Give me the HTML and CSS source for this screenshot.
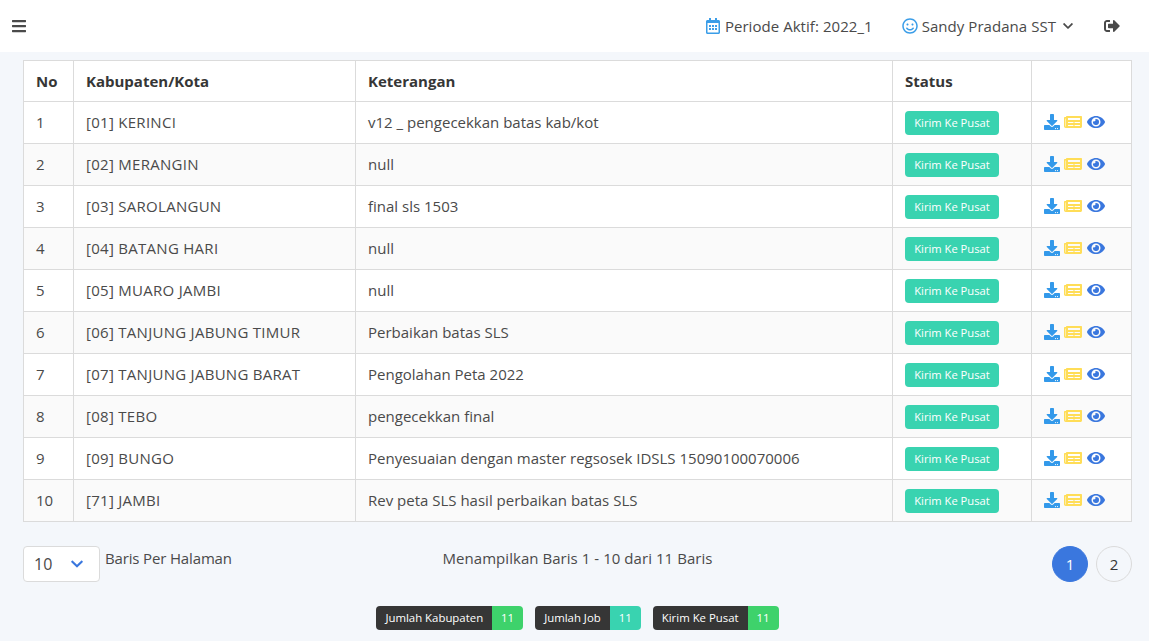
FILE: index.html
```html
<!DOCTYPE html>
<html>
    <head>
        <meta http-equiv="Content-Type" content="text/html; charset=utf-8" />
        <meta name="viewport" content="width=device-width, initial-scale=1.0">
        <title>Kirim Ke Pusat</title>
        <link rel="stylesheet" href="styles.css">
    </head>
<body>
    <svg class="sprite" xmlns="http://www.w3.org/2000/svg">
        <symbol id="i-bars" viewBox="0 0 448 512"><path d="M16 132h416c8.837 0 16-7.163 16-16V76c0-8.837-7.163-16-16-16H16C7.163 60 0 67.163 0 76v40c0 8.837 7.163 16 16 16zm0 160h416c8.837 0 16-7.163 16-16v-40c0-8.837-7.163-16-16-16H16c-8.837 0-16 7.163-16 16v40c0 8.837 7.163 16 16 16zm0 160h416c8.837 0 16-7.163 16-16v-40c0-8.837-7.163-16-16-16H16c-8.837 0-16 7.163-16 16v40c0 8.837 7.163 16 16 16z"/></symbol>
        <symbol id="i-chevron" viewBox="0 0 448 512"><path d="M207.029 381.476L12.686 187.132c-9.373-9.373-9.373-24.569 0-33.941l22.667-22.667c9.357-9.357 24.522-9.375 33.901-.04L224 284.505l154.745-154.021c9.379-9.335 24.544-9.317 33.901.04l22.667 22.667c9.373 9.373 9.373 24.569 0 33.941L240.971 381.476c-9.373 9.372-24.569 9.372-33.942 0z"/></symbol>
        <symbol id="i-eye" viewBox="0 0 576 512"><path d="M572.52 241.4C518.29 135.59 410.93 64 288 64S57.68 135.64 3.48 241.41a32.35 32.35 0 0 0 0 29.19C57.71 376.41 165.07 448 288 448s230.32-71.64 284.52-177.41a32.35 32.35 0 0 0 0-29.19zM288 400a144 144 0 1 1 144-144 143.93 143.93 0 0 1-144 144zm0-240a95.31 95.31 0 0 0-25.31 3.79 47.85 47.85 0 0 1-66.9 66.9A95.78 95.78 0 1 0 288 160z"/></symbol>
        <symbol id="i-download" viewBox="0 0 512 512"><path d="M216 0h80c13.3 0 24 10.7 24 24v168h87.7c17.8 0 26.7 21.5 14.1 34.1L269.7 378.3c-7.5 7.5-19.8 7.5-27.3 0L90.1 226.1c-12.6-12.6-3.7-34.1 14.1-34.1H192V24c0-13.3 10.7-24 24-24zm296 376v112c0 13.3-10.7 24-24 24H24c-13.3 0-24-10.7-24-24V376c0-13.3 10.7-24 24-24h146.7l49 49c20.1 20.1 52.5 20.1 72.6 0l49-49H488c13.3 0 24 10.7 24 24zm-124 88c0-11-9-20-20-20s-20 9-20 20 9 20 20 20 20-9 20-20zm64 0c0-11-9-20-20-20s-20 9-20 20 9 20 20 20 20-9 20-20z"/></symbol>
        <symbol id="i-news" viewBox="0 0 576 512"><path d="M552 64H88c-13.255 0-24 10.745-24 24v8H24c-13.255 0-24 10.745-24 24v272c0 30.928 25.072 56 56 56h472c26.51 0 48-21.49 48-48V88c0-13.255-10.745-24-24-24zM56 400a8 8 0 0 1-8-8V144h16v248a8 8 0 0 1-8 8zm236-16H140c-6.627 0-12-5.373-12-12v-8c0-6.627 5.373-12 12-12h152c6.627 0 12 5.373 12 12v8c0 6.627-5.373 12-12 12zm208 0H348c-6.627 0-12-5.373-12-12v-8c0-6.627 5.373-12 12-12h152c6.627 0 12 5.373 12 12v8c0 6.627-5.373 12-12 12zm-208-96H140c-6.627 0-12-5.373-12-12v-8c0-6.627 5.373-12 12-12h152c6.627 0 12 5.373 12 12v8c0 6.627-5.373 12-12 12zm208 0H348c-6.627 0-12-5.373-12-12v-8c0-6.627 5.373-12 12-12h152c6.627 0 12 5.373 12 12v8c0 6.627-5.373 12-12 12zm0-96H140c-6.627 0-12-5.373-12-12v-40c0-6.627 5.373-12 12-12h360c6.627 0 12 5.373 12 12v40c0 6.627-5.373 12-12 12z"/></symbol>
        <symbol id="i-calendar" viewBox="0 0 448 512"><path d="M148 288h-40c-6.6 0-12-5.4-12-12v-40c0-6.6 5.4-12 12-12h40c6.6 0 12 5.4 12 12v40c0 6.6-5.4 12-12 12zm108-12v-40c0-6.6-5.4-12-12-12h-40c-6.6 0-12 5.4-12 12v40c0 6.6 5.4 12 12 12h40c6.6 0 12-5.4 12-12zm96 0v-40c0-6.6-5.4-12-12-12h-40c-6.6 0-12 5.4-12 12v40c0 6.6 5.4 12 12 12h40c6.6 0 12-5.4 12-12zm-96 96v-40c0-6.6-5.4-12-12-12h-40c-6.6 0-12 5.4-12 12v40c0 6.6 5.4 12 12 12h40c6.6 0 12-5.4 12-12zm-96 0v-40c0-6.6-5.4-12-12-12h-40c-6.6 0-12 5.4-12 12v40c0 6.6 5.4 12 12 12h40c6.6 0 12-5.4 12-12zm192 0v-40c0-6.6-5.4-12-12-12h-40c-6.6 0-12 5.4-12 12v40c0 6.6 5.4 12 12 12h40c6.6 0 12-5.4 12-12zm96-260v352c0 26.5-21.5 48-48 48H48c-26.5 0-48-21.5-48-48V112c0-26.5 21.5-48 48-48h48V12c0-6.6 5.4-12 12-12h40c6.6 0 12 5.4 12 12v52h128V12c0-6.6 5.4-12 12-12h40c6.6 0 12 5.4 12 12v52h48c26.5 0 48 21.5 48 48zm-48 346V160H48v298c0 3.3 2.7 6 6 6h340c3.3 0 6-2.7 6-6z"/></symbol>
        <symbol id="i-smile" viewBox="0 0 496 512"><path d="M248 8C111 8 0 119 0 256s111 248 248 248 248-111 248-248S385 8 248 8zm0 448c-110.300 0-200-89.700-200-200S137.700 56 248 56s200 89.700 200 200-89.700 200-200 200zm-80-216c17.700 0 32-14.300 32-32s-14.300-32-32-32-32 14.300-32 32 14.300 32 32 32zm160 0c17.700 0 32-14.300 32-32s-14.300-32-32-32-32 14.300-32 32 14.300 32 32 32zm4 72.600c-20.800 25-51.500 39.400-84 39.400s-63.200-14.300-84-39.400c-8.500-10.200-23.700-11.500-33.800-3.100-10.200 8.500-11.500 23.600-3.100 33.800 30 36 74.100 56.600 120.900 56.600s90.900-20.600 120.900-56.600c8.500-10.200 7.100-25.300-3.100-33.800-10.100-8.400-25.300-7.100-33.800 3.100z"/></symbol>
        <symbol id="i-signout" viewBox="0 0 512 512"><path d="M497 273L329 441c-15 15-41 4.500-41-17v-96H152c-13.300 0-24-10.700-24-24v-96c0-13.300 10.700-24 24-24h136V88c0-21.400 25.900-32 41-17l168 168c9.300 9.400 9.300 24.600 0 34zM192 436v-40c0-6.600-5.400-12-12-12H96c-17.700 0-32-14.300-32-32V160c0-17.700 14.300-32 32-32h84c6.600 0 12-5.400 12-12V76c0-6.600-5.400-12-12-12H96c-53 0-96 43-96 96v192c0 53 43 96 96 96h84c6.600 0 12-5.400 12-12z"/></symbol>
    </svg>

    <nav class="navbar">
        <svg class="icon navBurger"><use href="#i-bars"/></svg>
        <div class="navRight">
            <div class="navItem periode">
                <svg class="icon navIcon"><use href="#i-calendar"/></svg>
                <span>Periode Aktif: 2022_1</span>
            </div>
            <div class="navItem user">
                <svg class="icon navIcon"><use href="#i-smile"/></svg>
                <span>Sandy Pradana SST</span>
                <svg class="icon navChevron"><use href="#i-chevron"/></svg>
            </div>
            <svg class="icon navLogout"><use href="#i-signout"/></svg>
        </div>
    </nav>

    <main class="content">
        <table class="dataTable">
            <colgroup>
                <col class="colNo">
                <col class="colKota">
                <col class="colKet">
                <col class="colStatus">
                <col class="colAksi">
            </colgroup>
            <thead>
                <tr><th>No</th><th>Kabupaten/Kota</th><th>Keterangan</th><th>Status</th><th></th></tr>
            </thead>
            <tbody>
                <tr>
                    <td>1</td><td>[01] KERINCI</td><td>v12 _ pengecekkan batas kab/kot</td>
                    <td><span class="statusTag">Kirim Ke Pusat</span></td>
                    <td><div class="actions"><svg class="icon actDownload"><use href="#i-download"/></svg><svg class="icon actNews"><use href="#i-news"/></svg><svg class="icon actEye"><use href="#i-eye"/></svg></div></td>
                </tr>
                <tr>
                    <td>2</td><td>[02] MERANGIN</td><td>null</td>
                    <td><span class="statusTag">Kirim Ke Pusat</span></td>
                    <td><div class="actions"><svg class="icon actDownload"><use href="#i-download"/></svg><svg class="icon actNews"><use href="#i-news"/></svg><svg class="icon actEye"><use href="#i-eye"/></svg></div></td>
                </tr>
                <tr>
                    <td>3</td><td>[03] SAROLANGUN</td><td>final sls 1503</td>
                    <td><span class="statusTag">Kirim Ke Pusat</span></td>
                    <td><div class="actions"><svg class="icon actDownload"><use href="#i-download"/></svg><svg class="icon actNews"><use href="#i-news"/></svg><svg class="icon actEye"><use href="#i-eye"/></svg></div></td>
                </tr>
                <tr>
                    <td>4</td><td>[04] BATANG HARI</td><td>null</td>
                    <td><span class="statusTag">Kirim Ke Pusat</span></td>
                    <td><div class="actions"><svg class="icon actDownload"><use href="#i-download"/></svg><svg class="icon actNews"><use href="#i-news"/></svg><svg class="icon actEye"><use href="#i-eye"/></svg></div></td>
                </tr>
                <tr>
                    <td>5</td><td>[05] MUARO JAMBI</td><td>null</td>
                    <td><span class="statusTag">Kirim Ke Pusat</span></td>
                    <td><div class="actions"><svg class="icon actDownload"><use href="#i-download"/></svg><svg class="icon actNews"><use href="#i-news"/></svg><svg class="icon actEye"><use href="#i-eye"/></svg></div></td>
                </tr>
                <tr>
                    <td>6</td><td>[06] TANJUNG JABUNG TIMUR</td><td>Perbaikan batas SLS</td>
                    <td><span class="statusTag">Kirim Ke Pusat</span></td>
                    <td><div class="actions"><svg class="icon actDownload"><use href="#i-download"/></svg><svg class="icon actNews"><use href="#i-news"/></svg><svg class="icon actEye"><use href="#i-eye"/></svg></div></td>
                </tr>
                <tr>
                    <td>7</td><td>[07] TANJUNG JABUNG BARAT</td><td>Pengolahan Peta 2022</td>
                    <td><span class="statusTag">Kirim Ke Pusat</span></td>
                    <td><div class="actions"><svg class="icon actDownload"><use href="#i-download"/></svg><svg class="icon actNews"><use href="#i-news"/></svg><svg class="icon actEye"><use href="#i-eye"/></svg></div></td>
                </tr>
                <tr>
                    <td>8</td><td>[08] TEBO</td><td>pengecekkan final</td>
                    <td><span class="statusTag">Kirim Ke Pusat</span></td>
                    <td><div class="actions"><svg class="icon actDownload"><use href="#i-download"/></svg><svg class="icon actNews"><use href="#i-news"/></svg><svg class="icon actEye"><use href="#i-eye"/></svg></div></td>
                </tr>
                <tr>
                    <td>9</td><td>[09] BUNGO</td><td>Penyesuaian dengan master regsosek IDSLS 15090100070006</td>
                    <td><span class="statusTag">Kirim Ke Pusat</span></td>
                    <td><div class="actions"><svg class="icon actDownload"><use href="#i-download"/></svg><svg class="icon actNews"><use href="#i-news"/></svg><svg class="icon actEye"><use href="#i-eye"/></svg></div></td>
                </tr>
                <tr>
                    <td>10</td><td>[71] JAMBI</td><td>Rev peta SLS hasil perbaikan batas SLS</td>
                    <td><span class="statusTag">Kirim Ke Pusat</span></td>
                    <td><div class="actions"><svg class="icon actDownload"><use href="#i-download"/></svg><svg class="icon actNews"><use href="#i-news"/></svg><svg class="icon actEye"><use href="#i-eye"/></svg></div></td>
                </tr>
            </tbody>
        </table>

        <div class="tableFooter">
            <div class="perPage">
                <div class="pageSelect">
                    <span>10</span>
                    <svg class="icon selectChevron"><use href="#i-chevron"/></svg>
                </div>
                <span class="perPageLabel">Baris Per Halaman</span>
            </div>
            <div class="rowInfo">Menampilkan Baris 1 - 10 dari 11 Baris</div>
            <div class="pager">
                <a class="pageBtn current">1</a>
                <a class="pageBtn">2</a>
            </div>
        </div>

        <div class="summary">
            <div class="sumTag"><span class="sumName">Jumlah Kabupaten</span><span class="sumVal green">11</span></div>
            <div class="sumTag"><span class="sumName">Jumlah Job</span><span class="sumVal teal">11</span></div>
            <div class="sumTag"><span class="sumName">Kirim Ke Pusat</span><span class="sumVal green">11</span></div>
        </div>
    </main>
</body>
</html>
```
FILE: styles.css
```css
html, body {
    height: 100%;
}
body {
    margin: 0;
    padding: 0;
    background-color: #f4f7fb;
    color: #4a4a4a;
    font-family: "Open Sans", "Noto Sans", sans-serif;
    font-size: 15px;
    overflow: hidden;
}
.sprite {
    display: none;
}
.icon {
    display: block;
    fill: currentColor;
    flex: none;
}

/* navbar */
.navbar {
    height: 52px;
    background-color: #fff;
    display: flex;
    align-items: center;
    justify-content: space-between;
    padding: 0 29px 0 12px;
}
.navBurger {
    width: 14px;
    height: 16px;
    color: #4a4a4a;
}
.navRight {
    display: flex;
    align-items: center;
}
.navItem {
    display: flex;
    align-items: center;
    letter-spacing: 0.05px;
}
.navIcon {
    width: 14px;
    height: 16px;
    margin-right: 5px;
    color: #3a9de8;
}
.periode {
    margin-right: 29px;
}
.user .navIcon {
    width: 16px;
    margin-right: 4px;
}
.navChevron {
    width: 10px;
    height: 12px;
    margin-left: 7px;
    color: #4a4a4a;
}
.navLogout {
    width: 16px;
    height: 16px;
    margin-left: 31px;
    color: #4a4a4a;
}

/* table */
.content {
    padding: 8px 17px 0 23px;
}
.dataTable {
    width: 1108px;
    table-layout: fixed;
    border-collapse: collapse;
    background-color: #fff;
}
.colNo { width: 50px; }
.colKota { width: 282px; }
.colKet { width: 537px; }
.colStatus { width: 139px; }
.colAksi { width: 100px; }
.dataTable th,
.dataTable td {
    border: 1px solid #dbdbdb;
    padding: 0 12px;
    text-align: left;
    white-space: nowrap;
}
.dataTable th {
    height: 40px;
    color: #363636;
    font-weight: 700;
}
.dataTable td {
    height: 39px;
    padding-bottom: 2px;
}
.dataTable tbody td:nth-child(2) {
    letter-spacing: 0.28px;
}
.dataTable tbody td:nth-child(4) {
    height: 41px;
    padding-bottom: 0;
}
.dataTable tbody tr:nth-child(even) {
    background-color: #fafafa;
}
.statusTag {
    display: inline-flex;
    align-items: center;
    height: 24px;
    width: 94px;
    justify-content: center;
    border-radius: 4px;
    background-color: #39d3b0;
    color: #fff;
    font-size: 11.2px;
    vertical-align: middle;
}
.actions {
    display: flex;
    align-items: center;
}
.actDownload {
    width: 16px;
    height: 16px;
    color: #3399ea;
}
.actNews {
    width: 18px;
    height: 16px;
    margin-left: 4px;
    color: #ffdd57;
}
.actEye {
    width: 18px;
    height: 16px;
    margin-left: 5px;
    color: #3a77de;
}

/* footer under the table */
.tableFooter {
    display: grid;
    grid-template-columns: 1fr 1fr 1fr;
    margin-top: 24px;
    height: 36px;
}
.perPage {
    display: flex;
    align-items: flex-start;
}
.pageSelect {
    box-sizing: border-box;
    width: 77px;
    height: 36px;
    display: flex;
    align-items: center;
    justify-content: space-between;
    padding: 0 16px 0 10px;
    background-color: #fff;
    border: 1px solid #dbdbdb;
    border-radius: 4px;
    font-size: 16px;
}
.selectChevron {
    width: 12px;
    height: 14px;
    color: #3a77de;
}
.perPageLabel {
    margin-left: 5px;
    line-height: 24px;
    letter-spacing: -0.15px;
}
.rowInfo {
    text-align: center;
    line-height: 24px;
    letter-spacing: 0.05px;
}
.pager {
    display: flex;
    justify-content: flex-end;
    gap: 8px;
}
.pageBtn {
    box-sizing: border-box;
    width: 36px;
    height: 36px;
    display: flex;
    align-items: center;
    justify-content: center;
    border: 1px solid #dbdbdb;
    border-radius: 50%;
    color: #363636;
}
.pageBtn.current {
    background-color: #3a77de;
    border-color: #3a77de;
    color: #fff;
}

/* totals */
.summary {
    display: flex;
    justify-content: center;
    gap: 12px;
    margin-top: 24px;
}
.sumTag {
    display: flex;
    height: 24px;
    line-height: 24px;
    border-radius: 4px;
    overflow: hidden;
    font-size: 11.4px;
    color: #fff;
}
.sumName {
    background-color: #363636;
    padding: 0 9px;
}
.sumVal {
    width: 31px;
    text-align: center;
}
.green { background-color: #3ed26b; }
.teal { background-color: #39d3b0; }
```
